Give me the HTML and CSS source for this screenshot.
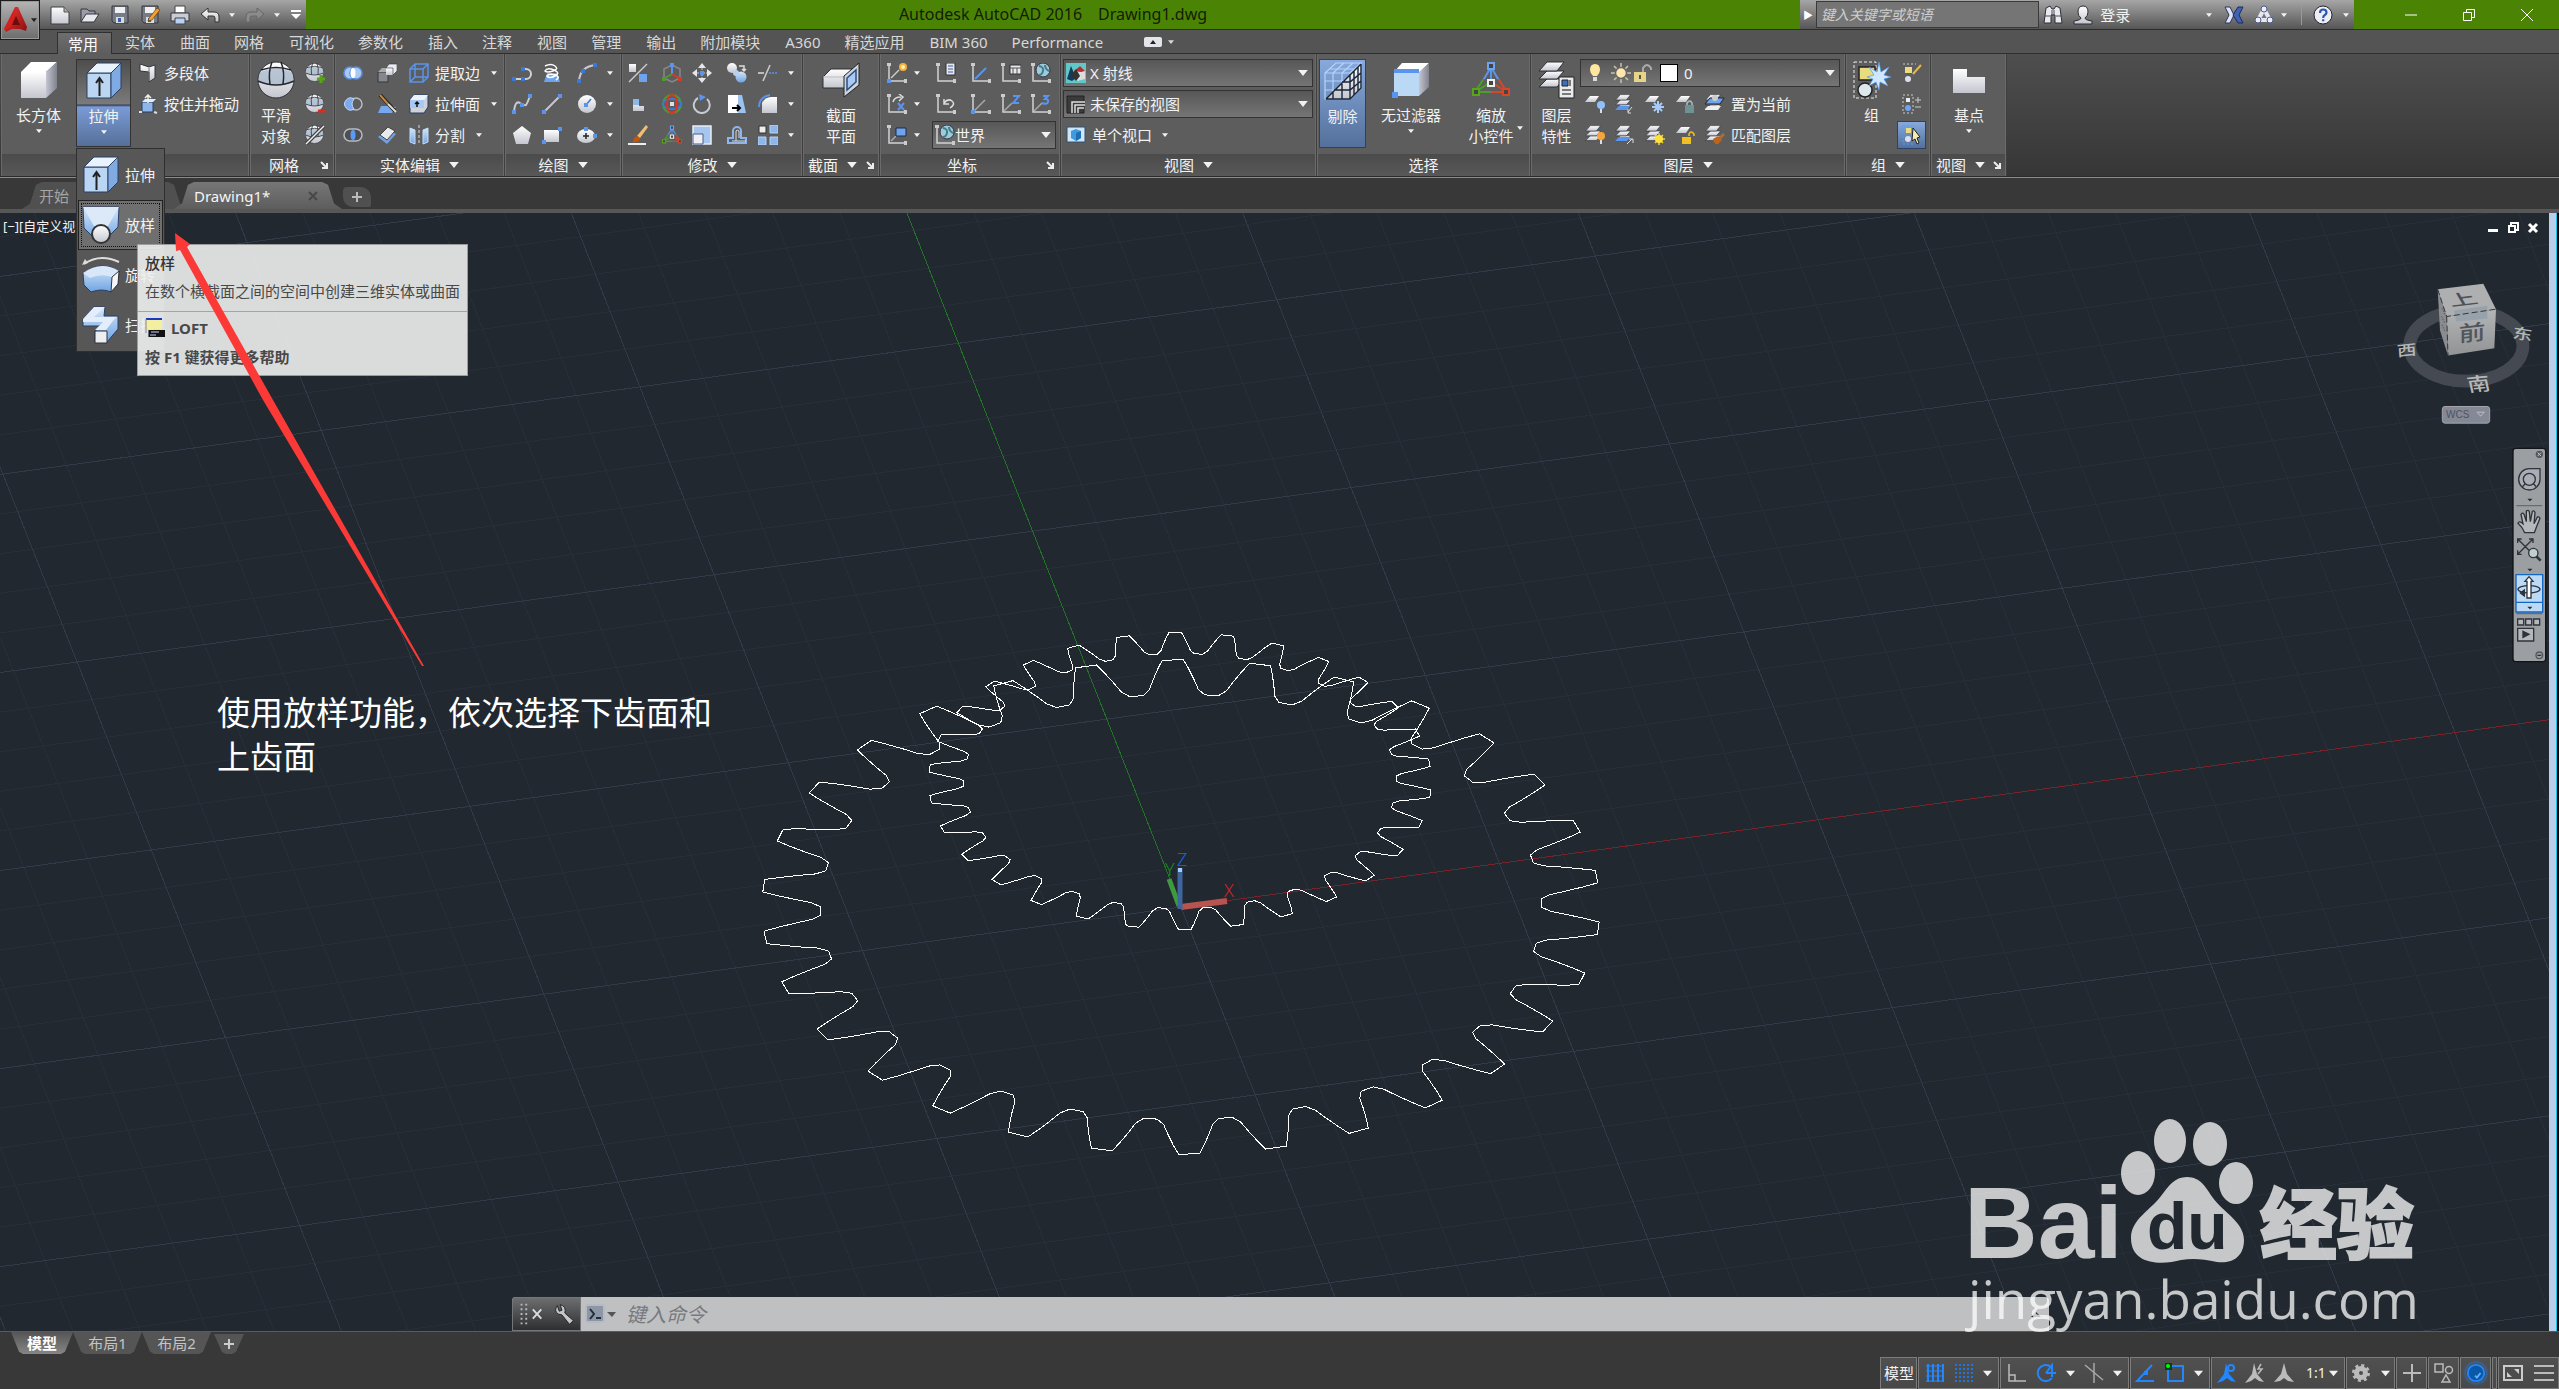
FILE: index.html
```html
<!DOCTYPE html>
<html lang="zh-CN">
<head>
<meta charset="utf-8">
<title>Autodesk AutoCAD 2016 Drawing1.dwg</title>
<link rel="stylesheet" href="styles.css">
</head>
<body>
<svg class="sprite" aria-hidden="true">
  <defs>
    <linearGradient id="gw" x1="0" y1="0" x2="0" y2="1"><stop offset="0" stop-color="#fff"/><stop offset="1" stop-color="#c4c6cf"/></linearGradient>
    <linearGradient id="gb" x1="0" y1="0" x2="0" y2="1"><stop offset="0" stop-color="#d5e6f8"/><stop offset="1" stop-color="#6ea4e4"/></linearGradient>
    <linearGradient id="gs" x1="0" y1="0" x2="1" y2="0"><stop offset="0" stop-color="#c3c6d2"/><stop offset="1" stop-color="#80828c"/></linearGradient>
    <linearGradient id="gc" x1="0" y1="0" x2="0" y2="1"><stop offset="0" stop-color="#b4b5b7"/><stop offset="1" stop-color="#929395"/></linearGradient>
    <linearGradient id="gr" x1="0" y1="0" x2="1" y2="1"><stop offset="0" stop-color="#f03a34"/><stop offset="1" stop-color="#8d0e10"/></linearGradient>
  </defs>
  <symbol id="dn" viewBox="0 0 8 5"><path d="M0 0h8L4 5z" fill="currentColor"/></symbol>
  <symbol id="dlg" viewBox="0 0 8 8"><path d="M1 1l5 5M7 2v5H2" fill="none" stroke="#eee" stroke-width="2"/></symbol>
  <symbol id="logo" viewBox="0 0 24 26"><path d="M11 0h3l9 20-1 4-6-2-3 0-5 0-6 3-2-3z" fill="url(#gr)"/><path d="M12 9l4 9H8z" fill="#6d0b0d"/><path d="M12 0L8 18l-6 5L0 22z" fill="#d5201f"/></symbol>
  <symbol id="new" viewBox="0 0 20 20"><path d="M1 2h13l5 5v12H1z" fill="url(#gw)" stroke="#3b3e46"/><path d="M14 2v5h5" fill="#aaa" stroke="#555"/></symbol>
  <symbol id="open" viewBox="0 0 20 20"><path d="M1 17V4h6l2 2h6v3" fill="#9a9da5" stroke="#33363d"/><path d="M1 17l5-8h13l-5 8z" fill="#e6e8ee" stroke="#33363d"/></symbol>
  <symbol id="save" viewBox="0 0 20 20"><path d="M2 1h16v17H4l-2-2z" fill="#767b86" stroke="#33363d"/><path d="M5 2h10v6H5z" fill="#eef0f4"/><path d="M6 12h8v6H6z" fill="#d8dae0"/><path d="M8 13h3v4H8z" fill="#3c5fa5"/></symbol>
  <symbol id="saveas" viewBox="0 0 20 20"><use href="#save"/><path d="M9 13l8-10 3 2-8 10-4 1z" fill="#f0a12e" stroke="#5c3b0c" stroke-width=".7"/></symbol>
  <symbol id="print" viewBox="0 0 20 20"><path d="M5 1h10v7H5z" fill="#fff" stroke="#444"/><path d="M1 8h18v8H1z" fill="#c9ccd4" stroke="#33363d"/><path d="M5 13h10v6H5z" fill="#b6d1f4" stroke="#444"/></symbol>
  <symbol id="undo" viewBox="0 0 20 20"><path d="M1 9l7-6v4h6q5 0 5 5v5h-4v-4q0-2-2-2H8v4z" fill="url(#gw)" stroke="#333"/></symbol>
  <symbol id="redo" viewBox="0 0 20 20"><path d="M19 9l-7-6v4H6q-5 0-5 5v5h4v-4q0-2 2-2h5v4z" fill="#8a8b8e" stroke="#666"/></symbol>
  <symbol id="more" viewBox="0 0 12 10"><path d="M1 1h10" stroke="#fff" stroke-width="2"/><path d="M1 4h10L6 9z" fill="#fff"/></symbol>
  <symbol id="bino" viewBox="0 0 20 20"><path d="M3 3l4-2 2 3h2l2-3 4 2 2 15h-7v-8H8v8H1z" fill="#e8eaf0" stroke="#2c2f36"/><path d="M2 11h5M13 11h5M9 5v5h2V5" stroke="#4a4d55" fill="none"/></symbol>
  <symbol id="user" viewBox="0 0 20 20"><path d="M10 1q5 0 5 6 0 4-3 6 0 2 7 3v3H1v-3q7-1 7-3-3-2-3-6 0-6 5-6z" fill="url(#gw)" stroke="#2c2f36"/></symbol>
  <symbol id="exch" viewBox="0 0 20 20"><path d="M1 2h5l4 8-4 8H1l4-8z" fill="#dfe5f2" stroke="#27375f"/><path d="M19 2h-5l-5 8 5 8h5l-4-8z" fill="#3f62b3" stroke="#1c2d5b"/></symbol>
  <symbol id="a360" viewBox="0 0 20 20"><path d="M10 4L4 15h12z" fill="none" stroke="#e4e8f2" stroke-width="4" stroke-linejoin="round"/><circle cx="10" cy="4" r="3" fill="#eef" stroke="#4a5c8c"/><circle cx="4" cy="15" r="3" fill="#eef" stroke="#4a5c8c"/><circle cx="16" cy="15" r="3" fill="#eef" stroke="#4a5c8c"/></symbol>
  <symbol id="help" viewBox="0 0 20 20"><circle cx="10" cy="10" r="9" fill="#eceef4" stroke="#23262c"/><path d="M7 8q0-3.500 3.200-3.500T13.500 7.500q0 1.500-1.700 2.500T10.200 13M10.200 14.200v2" fill="none" stroke="#2d55b0" stroke-width="2.200"/></symbol>

  <symbol id="box" viewBox="0 0 38 38"><path d="M1 11h25v26H1z" fill="url(#gw)"/><path d="M1 11L11 1h26L26 11z" fill="#fff"/><path d="M26 11L37 1v26L26 37z" fill="url(#gs)"/></symbol>
  <symbol id="extr" viewBox="0 0 38 38"><path d="M2 11h24v25H2z" fill="#bad6f2" stroke="#2a3f66"/><path d="M2 11L12 1h24L26 11z" fill="#e9f3fd" stroke="#2a3f66"/><path d="M26 11L36 1v25L26 36z" fill="#7fabe2" stroke="#2a3f66"/><path d="M14.500 34V17M11 21l3.500-5 3.500 5" fill="none" stroke="#222" stroke-width="2"/></symbol>
  <symbol id="loft" viewBox="0 0 38 38"><path d="M1 1h36l-1 20-13 13q-5 2-9 0L2 22z" fill="url(#gb)" stroke="#2a3f66"/><path d="M1 1h36L26 20H12z" fill="#dbe9f8"/><circle cx="19" cy="28" r="9" fill="url(#gw)" stroke="#333" stroke-width="2"/></symbol>
  <symbol id="revo" viewBox="0 0 38 38"><path d="M2 8Q18-3 37 6" fill="none" stroke="#ddd" stroke-width="2"/><path d="M0 9l3-6 3 4z" fill="#ddd"/><path d="M1 17q18-13 36-2l-1 13-7 8q-9-4-20 0l-7-7z" fill="url(#gb)" stroke="#2a3f66"/><path d="M1 17q18-13 36-2l-7 6q-11-4-22 1z" fill="#d9e8f8"/><path d="M30 21l7-6-1 13-7 8z" fill="#f4f6fa" stroke="#333"/></symbol>
  <symbol id="swp" viewBox="0 0 38 38"><path d="M1 13L12 1h11l-1 9h14v13L25 36H13V25l7-5H1z" fill="url(#gb)" stroke="#2a3f66"/><path d="M1 13L12 1h11L12 11h22L24 24H13l8-8H1z" fill="#e3eefa"/><path d="M13 25h12v12H13z" fill="#eceef2" stroke="#333"/></symbol>
  <symbol id="poly" viewBox="0 0 20 20"><path d="M2 1l9 3 6-2v13l-6 4V9L2 8z" fill="url(#gw)" stroke="#33363d"/><path d="M11 5v13" stroke="#777"/></symbol>
  <symbol id="press" viewBox="0 0 20 20"><path d="M4 8h11v10H4z" fill="#8db6ea" stroke="#2a3f66"/><path d="M4 8l3-3h11l-3 3z" fill="#dfeefd"/><path d="M1 18h3M16 18l3 1" stroke="#ddd" stroke-width="2"/><path d="M10 9V2M7 4l3-3 3 3" stroke="#eee" stroke-width="1.500" fill="none"/></symbol>
  <symbol id="ball" viewBox="0 0 38 38"><circle cx="19" cy="19" r="18" fill="url(#gw)" stroke="#2d3036"/><path d="M3 11q16-7 32 0l2 10q-18 6-36 0z" fill="#9fb3c7" opacity=".7"/><path d="M1 20q18 8 36 0M4 9q15-5 30 0M15 1q-4 10-2 22M24 1q4 10 2 22" fill="none" stroke="#23262c" stroke-width="1.500"/></symbol>
  <symbol id="ballp" viewBox="0 0 20 20"><g transform="scale(.5)"><use href="#ball" width="38" height="38"/></g><path d="M12 16h8M16 12v8" stroke="#58a618" stroke-width="3"/></symbol>
  <symbol id="ballm" viewBox="0 0 20 20"><g transform="scale(.5)"><use href="#ball" width="38" height="38"/></g><path d="M13 17h7" stroke="#e02b18" stroke-width="3"/></symbol>
  <symbol id="balls" viewBox="0 0 20 20"><g transform="scale(.5)"><use href="#ball" width="38" height="38"/></g><path d="M1 19L19 1" stroke="#444" stroke-width="4"/><path d="M1 19L19 1" stroke="#eee" stroke-width="1.500"/></symbol>
  <symbol id="uni" viewBox="0 0 20 20"><g fill="#a9c8f2" stroke="#5a90dd" stroke-width="1.500"><circle cx="7" cy="10" r="6"/><circle cx="13" cy="10" r="6"/></g><ellipse cx="10" cy="10" rx="2.500" ry="5" fill="#fff"/></symbol>
  <symbol id="sub" viewBox="0 0 20 20"><circle cx="13" cy="10" r="6" fill="none" stroke="#b9bbc2" stroke-width="1.500"/><path d="M11 5a6 6 0 1 0 0 10q-4-5 0-10z" fill="#7baaf0" stroke="#c3dafa"/></symbol>
  <symbol id="int" viewBox="0 0 20 20"><rect x="1" y="4" width="18" height="12" rx="6" fill="#4d4e52" stroke="#b9bbc2" stroke-width="1.500"/><ellipse cx="10" cy="10" rx="2.500" ry="5" fill="#5b9bf3"/></symbol>
  <symbol id="intf" viewBox="0 0 20 20"><path d="M1 9h10v10H1z" fill="#85878c" stroke="#33363d"/><path d="M1 9l4-4h10l-4 4z" fill="#aaa"/><path d="M9 5h7v7H9z" fill="url(#gw)"/><path d="M9 5l3-4h8v7l-4 4V5z" fill="#e8ecf4" stroke="#333" stroke-width=".6"/></symbol>
  <symbol id="slice" viewBox="0 0 20 20"><path d="M1 19l3-7h9l6 1-4 6z" fill="#76a8ef"/><path d="M3 1l15 16" stroke="#2c2015" stroke-width="4"/><path d="M3 1l8 9" stroke="#c08a4a" stroke-width="2"/><path d="M11 10l8 8" stroke="#ddd" stroke-width="2"/></symbol>
  <symbol id="thick" viewBox="0 0 20 20"><path d="M1 12L10 4l9 5-9 10z" fill="#6fa2e4"/><path d="M3 10l8-8 7 4-8 9z" fill="#e8eaee" stroke="#444"/></symbol>
  <symbol id="edges" viewBox="0 0 20 20"><path d="M1 6h13v13H1zM1 6l5-5h13v13l-5 5M14 6l5-5M6 1v13h13M6 14l-5 5" fill="none" stroke="#5a94ec" stroke-width="1.500"/></symbol>
  <symbol id="exf" viewBox="0 0 20 20"><path d="M1 6l4-5h14v12l-4 6H1z" fill="#cfd2da" stroke="#2a3f66"/><path d="M1 6h14v8H1z" fill="#a9c9f3"/><path d="M1 6l4-5h14l-4 5z" fill="#eaf3fd"/><path d="M8 13V8M6 10l2-2 2 2" stroke="#111" fill="none" stroke-width="1.500"/></symbol>
  <symbol id="sep" viewBox="0 0 20 20"><path d="M1 3l5 2v14l-5-2zM19 3l-5 2v14l5-2z" fill="url(#gb)" stroke="#c6dcf8"/><path d="M10 0v20" stroke="#ddd" stroke-dasharray="3 2"/></symbol>

  <symbol id="pl" viewBox="0 0 20 20"><path d="M2 16h12a5 5 0 0 0 0-10h-4" fill="none" stroke="#d0d2d8" stroke-width="2"/><g fill="#3c78d8"><path d="M0 14h4v4H0zM9 4h4v4H9zM9 14h4v4H9z"/></g></symbol>
  <symbol id="helix" viewBox="0 0 20 20"><path d="M5 10h10l3 9H2z" fill="#6ea4ee"/><path d="M3 3q6-3 10 0t-2 5-8 0q2-4 9-1t1 6-8 0q2-3 8-1t1 5" fill="none" stroke="#fff" stroke-width="1.500"/></symbol>
  <symbol id="arc" viewBox="0 0 20 20"><path d="M2 18Q3 4 18 2" fill="none" stroke="#c8cad2" stroke-width="2"/><g fill="#3c78d8"><path d="M0 16h4v4H0zM4 6h4v4H4zM16 0h4v4h-4z"/></g></symbol>
  <symbol id="spl" viewBox="0 0 20 20"><path d="M2 18Q3 6 8 9t6 2 4-9" fill="none" stroke="#c8cad2" stroke-width="2"/><g fill="#5a94ec"><path d="M0 16h4v4H0zM8 9h4v4H8zM16 0h4v4h-4z"/></g></symbol>
  <symbol id="line" viewBox="0 0 20 20"><path d="M2 18L18 2" stroke="#c8cad2" stroke-width="2"/><path d="M0 16h4v4H0zM16 0h4v4h-4z" fill="#5a94ec"/></symbol>
  <symbol id="circ" viewBox="0 0 20 20"><circle cx="10" cy="10" r="9" fill="url(#gw)"/><path d="M9 11l5-6" stroke="#3c78d8" stroke-width="1.500"/><path d="M7 9h4v4H7z" fill="#5a94ec"/></symbol>
  <symbol id="pent" viewBox="0 0 20 20"><path d="M10 1l9 7-3 11H4L1 8z" fill="url(#gw)"/></symbol>
  <symbol id="rect" viewBox="0 0 20 20"><path d="M2 5h15v12H2z" fill="url(#gw)"/><path d="M0 15h4v4H0zM16 2h4v4h-4z" fill="#5a94ec"/></symbol>
  <symbol id="ell" viewBox="0 0 20 20"><ellipse cx="9" cy="11" rx="9" ry="7" fill="url(#gw)"/><path d="M6 11h6M9 8v6" stroke="#222" stroke-width="1.500"/><path d="M7 2h4v4H7zM16 9h4v4h-4z" fill="#5a94ec"/></symbol>

  <symbol id="m1" viewBox="0 0 20 20"><path d="M1 1h7v8H1z" fill="url(#gw)"/><path d="M11 11h8v8h-8z" fill="#6ea4ee"/><path d="M1 19L19 1" stroke="#ccc" stroke-width="1.500"/></symbol>
  <symbol id="m2" viewBox="0 0 20 20"><path d="M10 2l8 4v9l-8 4-8-4V6z" fill="none" stroke="#888" stroke-width="1.500"/><path d="M10 11V4" stroke="#5a94ec" stroke-width="2"/><path d="M10 11l-7 4" stroke="#4ba02a" stroke-width="2"/><path d="M10 11l7 4" stroke="#d83a22" stroke-width="2"/><path d="M0 14h4v4H0z" fill="#4ba02a"/><path d="M16 14h4v4h-4z" fill="#d83a22"/><path d="M8 0h4v4H8z" fill="#5a94ec"/></symbol>
  <symbol id="move" viewBox="0 0 20 20"><path d="M10 0l4 5h-8zM10 20l4-5h-8zM0 10l5-4v8zM20 10l-5-4v8z" fill="#e4e6ec"/><path d="M10 5v10M5 10h10" stroke="#ccc" stroke-dasharray="2 1"/><path d="M8 8h4v4H8z" fill="#5a94ec"/></symbol>
  <symbol id="copy" viewBox="0 0 20 20"><circle cx="5" cy="5" r="5" fill="url(#gw)"/><circle cx="14" cy="14" r="5.500" fill="url(#gb)"/><path d="M12 3h5v4M15 6l2 2 2-2" fill="none" stroke="#ddd" stroke-width="1.500"/><circle cx="9" cy="10" r="3" fill="#b8cff0"/></symbol>
  <symbol id="trim" viewBox="0 0 20 20"><path d="M0 10h6" stroke="#ddd" stroke-width="1.500"/><path d="M11 10h9" stroke="#5a94ec" stroke-width="1.500" stroke-dasharray="2 1"/><path d="M5 18L12 2" stroke="#ccc" stroke-width="1.500"/></symbol>
  <symbol id="m3" viewBox="0 0 20 20"><path d="M5 5h6v7h5v5H5z" fill="url(#gw)"/><path d="M5 5h6v6H5z" fill="#8db6ea"/></symbol>
  <symbol id="orb" viewBox="0 0 20 20"><circle cx="10" cy="10" r="9" fill="none" stroke="#4ba02a" stroke-width="2"/><ellipse cx="10" cy="10" rx="9" ry="5" fill="none" stroke="#3c78d8" stroke-width="2"/><ellipse cx="10" cy="10" rx="5" ry="9" fill="none" stroke="#e0321e" stroke-width="2"/><path d="M8 8h4v4H8z" fill="#ddd"/></symbol>
  <symbol id="rot" viewBox="0 0 20 20"><path d="M6 4a8 8 0 1 0 9 1" fill="none" stroke="#c8cad2" stroke-width="2"/><path d="M7 0l7 3-6 4z" fill="#5a94ec"/></symbol>
  <symbol id="tap" viewBox="0 0 20 20"><path d="M1 1h10v18H1z" fill="#fff"/><path d="M11 1l4 0 4 18h-8z" fill="#9cc3f0"/><path d="M5 14h7M10 11l3 3-3 3" stroke="#000" stroke-width="2" fill="none"/></symbol>
  <symbol id="fil" viewBox="0 0 20 20"><path d="M4 19V9q3-6 9-6h6v16z" fill="url(#gw)"/><path d="M1 13Q1 3 12 1" stroke="#5a94ec" stroke-width="2" fill="none"/></symbol>
  <symbol id="brush" viewBox="0 0 20 20"><path d="M9 11l9-11 2 2-8 11z" fill="#eec070"/><path d="M5 17q0-5 5-6l2 3q-2 4-7 3z" fill="#c0560f"/><path d="M0 19h18" stroke="#eee" stroke-width="2"/></symbol>
  <symbol id="giz" viewBox="0 0 38 38"><path d="M19 6L3 31h32z" fill="none" stroke="#888" stroke-width="1"/><path d="M19 6v15M19 6l-7 12M19 6l7 12" stroke="#5a94ec" stroke-width="2" fill="none"/><path d="M3 31l16-10M3 31h15M3 31l8-12" stroke="#4ba02a" stroke-width="2" fill="none"/><path d="M35 31L19 21M35 31H20M35 31l-8-12" stroke="#d8462a" stroke-width="2" fill="none"/><g fill="#444" stroke-width="2"><path d="M16 2h6v6h-6z" stroke="#6ea4ee"/><path d="M1 28h6v6H1z" stroke="#58a618"/><path d="M31 28h6v6h-6z" stroke="#d8462a"/><path d="M16 19h6v6h-6z" stroke="#eee"/></g></symbol>
  <symbol id="scale" viewBox="0 0 20 20"><path d="M1 1h18v18H1z" fill="#a6c6f0" stroke="#e8eef8" stroke-width="1.500"/><path d="M1 9h10v10H1z" fill="#eef0f4" stroke="#4a5c8c"/></symbol>
  <symbol id="off" viewBox="0 0 20 20"><path d="M1 18h18v-5h-5V6a4 4 0 0 0-8 0v7H1z" fill="none" stroke="#8db6ea" stroke-width="2"/><path d="M5 16h14M9 16V6a2 2 0 0 1 3 0v7" fill="none" stroke="#ddd" stroke-width="1"/></symbol>
  <symbol id="arr" viewBox="0 0 20 20"><path d="M1 1h7v7H1z" fill="#eee" stroke="#333"/><path d="M12 0h8v8h-8zM0 12h8v8H0zM12 12h8v8h-8z" fill="#8db6ea" stroke="#b9d3f6"/></symbol>
  <symbol id="sect" viewBox="0 0 38 38"><path d="M1 16l8-8h22v12l-8 7H1z" fill="url(#gw)" stroke="#2d3036"/><path d="M1 16h22v11" fill="none" stroke="#bbb"/><path d="M22 15L37 2v22L22 36z" fill="#d0d4da" stroke="#222"/><path d="M25 17l9-8v12l-9 8z" fill="#a9c9f3" stroke="#2a4f86" stroke-width="1.500"/></symbol>

  <symbol id="ax" viewBox="0 0 20 20"><path d="M2 1v17h17" fill="none" stroke="#d0d2d8" stroke-width="1.500"/><path d="M0 0h4v3H0zM17 16h3v4h-3z" fill="#ccc"/></symbol>
  <symbol id="c1" viewBox="0 0 20 20"><use href="#ax"/><path d="M4 15l8-8" stroke="#ccc" stroke-width="1.500"/><circle cx="16" cy="4" r="4" fill="#f7b03a"/><circle cx="16" cy="4" r="2" fill="#fff2b0"/><path d="M0 16h4v4H0z" fill="#5a94ec"/></symbol>
  <symbol id="c2" viewBox="0 0 20 20"><use href="#ax"/><path d="M10 0h9v12h-9z" fill="#e8e8ec" stroke="#333"/><path d="M12 3h5M12 6h5M12 9h5" stroke="#3c5fa5"/></symbol>
  <symbol id="c3" viewBox="0 0 20 20"><use href="#ax"/><path d="M4 16L15 5" stroke="#5a94ec" stroke-width="2"/></symbol>
  <symbol id="c4" viewBox="0 0 20 20"><use href="#ax"/><path d="M9 2h11v9H9z" fill="#e8e8ec" stroke="#333"/><path d="M9 5h11M12 5v6M16 5v6" stroke="#555"/></symbol>
  <symbol id="c5" viewBox="0 0 20 20"><use href="#ax"/><circle cx="12" cy="7" r="7" fill="#9fc9dc" stroke="#334"/><path d="M8 3q5 1 4 5t-4 4M14 2q0 4 4 6" fill="none" stroke="#3f7f86" stroke-width="2"/></symbol>
  <symbol id="c6" viewBox="0 0 20 20"><use href="#ax"/><path d="M6 8q1-5 8-5M12 0l4 3-4 4" fill="none" stroke="#ddd" stroke-width="1.500"/><path d="M11 9l6 7M17 9l-6 7" stroke="#5a94ec" stroke-width="2"/></symbol>
  <symbol id="c7" viewBox="0 0 20 20"><use href="#ax"/><path d="M8 9q4-5 8-2t-2 7M8 5v5h5" fill="none" stroke="#ddd" stroke-width="1.500"/></symbol>
  <symbol id="c8" viewBox="0 0 20 20"><use href="#ax"/><path d="M3 17L14 6" stroke="#aaa" stroke-width="1.500"/><path d="M0 16h4v4H0z" fill="#5a94ec"/></symbol>
  <symbol id="c9" viewBox="0 0 20 20"><use href="#ax"/><path d="M3 17l8-8" stroke="#aaa" stroke-width="1.500"/><path d="M12 2h6l-6 7h6" fill="none" stroke="#5a94ec" stroke-width="2"/></symbol>
  <symbol id="c10" viewBox="0 0 20 20"><use href="#ax"/><path d="M3 17l8-8" stroke="#aaa" stroke-width="1.500"/><path d="M12 2h5l-3 3q4 0 3 3t-6 1" fill="none" stroke="#5a94ec" stroke-width="2"/></symbol>
  <symbol id="c11" viewBox="0 0 20 20"><use href="#ax"/><path d="M4 16l5-5" stroke="#aaa" stroke-width="1.500"/><path d="M9 3h10v8H9z" fill="#6ea4ee" stroke="#1d2d4d"/></symbol>

  <symbol id="xray" viewBox="0 0 20 20"><path d="M0 0h20v20H0z" fill="#5fc9c9"/><path d="M1 16L5 3l5 12-4 3z" fill="#153a5c"/><path d="M8 8l6-5 5 5v8l-8 2z" fill="#ddd"/><path d="M8 8l6-5 5 5-4 1z" fill="#b03030"/><path d="M5 12l5-6 4 7-4 5z" fill="#333"/></symbol>
  <symbol id="view" viewBox="0 0 20 20"><path d="M1 2h17v17H1z" fill="#3a3a3a" stroke="#222"/><path d="M6 19V8h13M9 19v-8h10M12 19v-5h6" stroke="#ddd" fill="none" stroke-width="1.500"/></symbol>
  <symbol id="vp" viewBox="0 0 20 20"><path d="M1 2h18v15H1z" fill="#cfe6fa" stroke="#33506f"/><path d="M5 6l5-2 5 2v7l-5 3-5-3z" fill="#3f9be0"/><path d="M10 8v8l5-3V6z" fill="#1f6fb4"/></symbol>
  <symbol id="cull" viewBox="0 0 38 38"><path d="M2 37L37 2v24L27 37z" fill="url(#gw)"/><path d="M1 11h25v26H1zM1 11L12 1h25L26 11M37 1v25L26 37M9 11v26M18 11v26M1 19h25M1 28h25M26 19l11-9M26 28l11-9M30 8v25M34 4v25M6 7h25M20 1L9 11M29 1L18 11" fill="none" stroke="#b4d4ff" stroke-width="1.200"/><path d="M2 37h24L37 26V2M18 22v15M26 12v25M9 30v7M10 28h16l11-9M18 20h8l11-9M30 9v24M34 5v24M2 37L37 2" fill="none" stroke="#1d2430" stroke-width="1.400"/></symbol>
  <symbol id="nofil" viewBox="0 0 38 38"><path d="M2 11h25v24H2z" fill="#bbd8f4"/><path d="M2 11l8-9h27l-9 9z" fill="#fff"/><path d="M27 11L37 2v24l-10 9z" fill="url(#gs)"/><path d="M2 8h25v4H2zM0 31h6v6H0z" fill="#5a94ec"/></symbol>

  <symbol id="sheets" viewBox="0 0 38 38"><g fill="url(#gw)" stroke="#2d3036"><path d="M1 26l8-8h17l-7 8z"/><path d="M1 18l8-8h17l-7 8z"/><path d="M1 10l8-9h17l-7 9z"/></g></symbol>
  <symbol id="lprop" viewBox="0 0 38 38"><use href="#sheets"/><path d="M21 16h15v21H21z" fill="#e8eaee" stroke="#222"/><path d="M24 19h6v6h-6z" fill="#3f6fc0" stroke="#222"/><path d="M32 19v6M24 29h9M24 33h9" stroke="#555" stroke-width="1.500"/></symbol>
  <symbol id="s1" viewBox="0 0 20 20"><path d="M0 8l5-6h9l-4 6z" fill="url(#gw)"/></symbol>
  <symbol id="s3" viewBox="0 0 20 20"><g transform="scale(.6)"><use href="#sheets" width="38" height="38"/></g></symbol>
  <symbol id="l1" viewBox="0 0 20 20"><use href="#s1"/><circle cx="16" cy="11" r="4" fill="#8fc0fa"/><path d="M15 15h2v4h-2z" fill="#ddd"/></symbol>
  <symbol id="l2" viewBox="0 0 20 20"><use href="#s3"/><path d="M0 16l4-4h11l-3 4z" fill="#5a94ec"/><path d="M17 13l-4 5M13 15v4h3" stroke="#ddd" fill="none"/></symbol>
  <symbol id="l3" viewBox="0 0 20 20"><use href="#s1"/><path d="M13 7v12M7 13h12M9 9l8 8M17 9l-8 8" stroke="#a8ccfa" stroke-width="2"/></symbol>
  <symbol id="l4" viewBox="0 0 20 20"><use href="#s1"/><path d="M11 11V9q3-4 5 0v2" stroke="#aebfc0" fill="none" stroke-width="1.500"/><path d="M9 11h9v8H9z" fill="#6f9296"/></symbol>
  <symbol id="l5" viewBox="0 0 20 20"><use href="#s3"/><path d="M0 10l5-6h14l-4 6z" fill="#6ea4ee" stroke="#223"/><circle cx="10" cy="4" r="3" fill="#ccc"/><path d="M0 15l3-3h13l-3 4H0z" fill="#eee"/></symbol>
  <symbol id="l6" viewBox="0 0 20 20"><use href="#s3"/><circle cx="16" cy="11" r="4" fill="#f7a53a"/><path d="M15 15h2v4h-2z" fill="#ddd"/></symbol>
  <symbol id="l7" viewBox="0 0 20 20"><use href="#s3"/><path d="M0 16l4-4h11l-3 4z" fill="#5a94ec"/><path d="M12 19l5-5M14 14h4v4" stroke="#ddd" fill="none"/></symbol>
  <symbol id="l8" viewBox="0 0 20 20"><use href="#s3"/><path d="M14 8v12M8 14h12M10 10l8 8M18 10l-8 8" stroke="#f2d040" stroke-width="1.500"/><circle cx="14" cy="14" r="4" fill="#ffe23c"/></symbol>
  <symbol id="l9" viewBox="0 0 20 20"><use href="#s1"/><path d="M13 11V9q2-4 5 0v2" stroke="#f0c020" fill="none" stroke-width="1.500"/><path d="M6 12h9v7H6z" fill="#f0c020"/></symbol>
  <symbol id="l10" viewBox="0 0 20 20"><use href="#s3"/><path d="M8 14l5-3 4 4-4 4q-4 1-5-5z" fill="#c0641c"/><path d="M14 12l4-4 2 2-4 4z" fill="#a5703c"/></symbol>
  <symbol id="bulb" viewBox="0 0 12 20"><path d="M6 1q5 0 5 6 0 3-3 6H4Q1 10 1 7q0-6 5-6z" fill="#ffe7a0"/><path d="M4 14h4v4H4z" fill="#ddd"/></symbol>
  <symbol id="sun" viewBox="0 0 20 20"><path d="M10 0v20M0 10h20M3 3l14 14M17 3L3 17" stroke="#c8c2b0" stroke-width="1.500"/><circle cx="10" cy="10" r="5.500" fill="#ffe7b0" stroke="#666" stroke-width="1.500"/></symbol>
  <symbol id="unlock" viewBox="0 0 20 20"><path d="M10 9V5q4-6 8 0v2" stroke="#aaa" stroke-width="2" fill="none"/><path d="M1 9h12v10H1z" fill="#e8d488"/><path d="M6 12h2v4H6z" fill="#554"/></symbol>
  <symbol id="grp" viewBox="0 0 38 38"><path d="M1 1h22v36H1z" fill="none" stroke="#eee" stroke-dasharray="3 2"/><path d="M6 6h16v13H6z" fill="#e8dc82" stroke="#222" stroke-width="1.500"/><circle cx="12" cy="29" r="7" fill="#dce8ec" stroke="#222" stroke-width="1.500"/><path d="M26 1l2 10 8-5-5 8 7 2-7 2 4 7-8-4-1 8-3-8-7 4 4-7-6-2 7-2-5-8 8 5z" fill="#cfe8ff" stroke="#4a9af0" stroke-width=".7"/></symbol>
  <symbol id="g2" viewBox="0 0 20 20"><path d="M1 1h13" stroke="#ccc" stroke-dasharray="2 2"/><path d="M3 4h7v6H3z" fill="#e8dc82"/><circle cx="6" cy="16" r="3" fill="#dde"/><path d="M11 11l8-9" stroke="#e8b84a" stroke-width="2"/></symbol>
  <symbol id="g3" viewBox="0 0 20 20"><path d="M1 1h10v18H1z" fill="none" stroke="#ccc" stroke-dasharray="2 2"/><path d="M4 4h4v4H4z" fill="#eee"/><circle cx="6" cy="14" r="3" fill="#6ea4ee"/><path d="M13 6h6M16 3v6M13 13h6" stroke="#ccc"/></symbol>
  <symbol id="g4" viewBox="0 0 20 20"><path d="M1 1h10v18H1z" fill="none" stroke="#4ba0ff" stroke-dasharray="2 2"/><path d="M4 3h5v5H4z" fill="#e8dc82"/><circle cx="6" cy="14" r="3" fill="#dde"/><path d="M11 3l7 9-3 1 2 5-2 1-2-5-3 2z" fill="#f3eeb0" stroke="#222"/></symbol>
  <symbol id="base" viewBox="0 0 38 38"><path d="M3 8h14v8h18v16H3z" fill="url(#gw)"/></symbol>
  <symbol id="cmdi" viewBox="0 0 20 20"><path d="M1 1h16v10H1z" fill="#f3eea0"/><path d="M1 1h16" stroke="#1b36c0" stroke-width="2"/><path d="M1 1v14" stroke="#888"/><path d="M3 12h17v7H3z" fill="#111"/><path d="M3 11v8M6 14h8M5 17h6" stroke="#cdd6ff"/></symbol>

  <symbol id="b1" viewBox="0 0 20 20"><path d="M3 1v18M8 1v18M13 1v18M18 1v18" stroke="#2287ff" stroke-width="2"/><path d="M1 3h18M1 8h18M1 13h18M1 18h18" stroke="#2287ff"/></symbol>
  <symbol id="b2" viewBox="0 0 20 20"><path d="M1 2h18M1 6h18M1 10h18M1 14h18M1 18h18" stroke="#1f76dc" stroke-width="2" stroke-dasharray="2 2"/></symbol>
  <symbol id="b3" viewBox="0 0 20 20"><path d="M2 1v17h17M2 12h6v6" fill="none" stroke="#bbb" stroke-width="1.500"/></symbol>
  <symbol id="b4" viewBox="0 0 20 20"><path d="M15 4a8 8 0 1 0 1 11M10 10h10M10 10l6-8v12" fill="none" stroke="#2287ff" stroke-width="2"/></symbol>
  <symbol id="b5" viewBox="0 0 20 20"><path d="M1 2l18 15M10 0v20" fill="none" stroke="#a8a8a8" stroke-width="1.500"/></symbol>
  <symbol id="b6" viewBox="0 0 20 20"><path d="M17 2L2 18h17" fill="none" stroke="#2287ff" stroke-width="2"/><path d="M9 8h4v4H9z" fill="#2287ff"/></symbol>
  <symbol id="b7" viewBox="0 0 20 20"><path d="M3 3h15v15H3z" fill="none" stroke="#2287ff" stroke-width="2"/><path d="M0 0h7v7H0z" fill="#041"/><circle cx="3" cy="3" r="2" fill="#0f0"/></symbol>
  <symbol id="b8" viewBox="0 0 20 20"><path d="M9 0l3 11 7 8-5-1-4-3-4 3-6 2 7-9z" fill="#2287ff"/><circle cx="14" cy="5" r="3" fill="none" stroke="#2287ff" stroke-width="2"/></symbol>
  <symbol id="b9" viewBox="0 0 20 20"><path d="M9 0l3 11 7 8-5-1-4-3-4 3-6 2 7-9z" fill="#bbb"/><path d="M16 1l-3 5h4l-4 5" stroke="#bbb" fill="none" stroke-width="1.500"/></symbol>
  <symbol id="b10" viewBox="0 0 20 20"><path d="M10 0l3 11 7 8-6-1-4-3-4 3-6 1 7-8z" fill="#bbb"/></symbol>
  <symbol id="b11" viewBox="0 0 20 20"><circle cx="10" cy="10" r="4.500" fill="none" stroke="#bbb" stroke-width="5"/><circle cx="10" cy="10" r="7.500" fill="none" stroke="#bbb" stroke-width="3" stroke-dasharray="3 2.890"/></symbol>
  <symbol id="b12" viewBox="0 0 20 20"><path d="M10 1v18M1 10h18" stroke="#bbb" stroke-width="2"/></symbol>
  <symbol id="b13" viewBox="0 0 20 20"><path d="M1 1h8v8H1zM9 19h-1l4-7 4 7z" fill="none" stroke="#bbb" stroke-width="1.500"/><circle cx="15" cy="7" r="3.500" fill="none" stroke="#bbb" stroke-width="1.500"/></symbol>
  <symbol id="b14" viewBox="0 0 22 22"><circle cx="11" cy="11" r="9" fill="#0a59a8" stroke="#2287ff" stroke-width="2"/><path d="M10 14l2 2 4-5" stroke="#62b0ff" fill="none" stroke-width="2"/></symbol>
  <symbol id="b15" viewBox="0 0 20 20"><path d="M1 3h18v14H1z" fill="none" stroke="#ccc" stroke-width="2"/><path d="M4 14v-5l5 5zM16 6v5l-5-5z" fill="#ccc"/></symbol>
  <symbol id="b16" viewBox="0 0 20 20"><path d="M0 3h20M0 10h20M0 17h20" stroke="#bbb" stroke-width="2"/></symbol>
</svg>

<header class="titlebar">
  <button class="app" aria-label="应用程序"><svg class="logo"><use href="#logo"/></svg><svg class="dn dark"><use href="#dn"/></svg></button>
  <div class="qat">
    <button aria-label="新建"><svg class="i"><use href="#new"/></svg></button>
    <button aria-label="打开"><svg class="i"><use href="#open"/></svg></button>
    <button aria-label="保存"><svg class="i"><use href="#save"/></svg></button>
    <button aria-label="另存为"><svg class="i"><use href="#saveas"/></svg></button>
    <button aria-label="打印"><svg class="i"><use href="#print"/></svg></button>
    <button aria-label="放弃" class="split"><svg class="i"><use href="#undo"/></svg><svg class="dn"><use href="#dn"/></svg></button>
    <button aria-label="重做" class="split"><svg class="i"><use href="#redo"/></svg><svg class="dn"><use href="#dn"/></svg></button>
    <button aria-label="自定义"><svg class="more"><use href="#more"/></svg></button>
  </div>
  <h1 class="caption"><span>Autodesk AutoCAD 2016</span><span>Drawing1.dwg</span></h1>
  <div class="info">
    <button class="fold" aria-label="折叠">▶</button>
    <input class="search" type="text" placeholder="键入关键字或短语" aria-label="搜索">
    <button aria-label="搜索"><svg class="i"><use href="#bino"/></svg></button>
    <button class="login"><svg class="i"><use href="#user"/></svg><span>登录</span><svg class="dn"><use href="#dn"/></svg></button>
    <button aria-label="Exchange"><svg class="i"><use href="#exch"/></svg></button>
    <button aria-label="A360" class="split"><svg class="i"><use href="#a360"/></svg><svg class="dn"><use href="#dn"/></svg></button>
    <button aria-label="帮助" class="split help"><svg class="i"><use href="#help"/></svg><svg class="dn"><use href="#dn"/></svg></button>
  </div>
  <div class="win">
    <button aria-label="最小化"><svg viewBox="0 0 12 12"><path d="M0 6h12" stroke="#fff"/></svg></button>
    <button aria-label="还原"><svg viewBox="0 0 12 12"><path d="M.5 3.500h8v8h-8zM3.500 3V.5h8v8H9" fill="none" stroke="#fff"/></svg></button>
    <button aria-label="关闭"><svg viewBox="0 0 12 12"><path d="M0 0l12 12M12 0L0 12" stroke="#fff"/></svg></button>
  </div>
</header>

<nav class="tabs">
  <button class="on">常用</button><button>实体</button><button>曲面</button><button>网格</button><button>可视化</button><button>参数化</button><button>插入</button><button>注释</button><button>视图</button><button>管理</button><button>输出</button><button>附加模块</button><button>A360</button><button>精选应用</button><button>BIM 360</button><button>Performance</button>
  <button class="toggle" aria-label="最小化功能区"><svg class="tog" viewBox="0 0 18 10"><rect width="18" height="10" rx="2" fill="#e4e5ea"/><path d="M6 7h6L9 3z" fill="#222"/></svg><svg class="dn"><use href="#dn"/></svg></button>
</nav>

<div class="ribbon">
  <section class="panel p1">
    <div class="body">
      <button class="big w75"><svg class="I"><use href="#box"/></svg><span>长方体</span><svg class="dn"><use href="#dn"/></svg></button>
      <button class="big w55 open"><svg class="I"><use href="#extr"/></svg><span>拉伸</span><svg class="dn"><use href="#dn"/></svg></button>
      <div class="grid g-m">
        <button><svg class="i"><use href="#poly"/></svg>多段体</button>
        <button><svg class="i"><use href="#press"/></svg>按住并拖动</button>
      </div>
    </div>
    <h2></h2>
  </section>
  <section class="panel p2">
    <div class="body">
      <button class="big w52"><svg class="I"><use href="#ball"/></svg><span>平滑<br>对象</span></button>
      <div class="grid g-1">
        <button aria-label="提高平滑度"><svg class="i"><use href="#ballp"/></svg></button>
        <button aria-label="降低平滑度"><svg class="i"><use href="#ballm"/></svg></button>
        <button aria-label="优化网格"><svg class="i"><use href="#balls"/></svg></button>
      </div>
    </div>
    <h2><span>网格</span><svg class="dlg"><use href="#dlg"/></svg></h2>
  </section>
  <section class="panel p3">
    <div class="body">
      <div class="grid g-3">
        <button aria-label="并集"><svg class="i"><use href="#uni"/></svg></button><button aria-label="干涉"><svg class="i"><use href="#intf"/></svg></button><button><svg class="i"><use href="#edges"/></svg>提取边<svg class="dn"><use href="#dn"/></svg></button>
        <button aria-label="差集"><svg class="i"><use href="#sub"/></svg></button><button aria-label="剖切"><svg class="i"><use href="#slice"/></svg></button><button><svg class="i"><use href="#exf"/></svg>拉伸面<svg class="dn"><use href="#dn"/></svg></button>
        <button aria-label="交集"><svg class="i"><use href="#int"/></svg></button><button aria-label="加厚"><svg class="i"><use href="#thick"/></svg></button><button><svg class="i"><use href="#sep"/></svg>分割<svg class="dn"><use href="#dn"/></svg></button>
      </div>
    </div>
    <h2><span>实体编辑</span><svg class="DN"><use href="#dn"/></svg></h2>
  </section>
  <section class="panel p4">
    <div class="body">
      <div class="grid g-4">
        <button aria-label="多段线"><svg class="i"><use href="#pl"/></svg></button><button aria-label="螺旋"><svg class="i"><use href="#helix"/></svg></button><button class="split" aria-label="圆弧"><svg class="i"><use href="#arc"/></svg><svg class="dn"><use href="#dn"/></svg></button>
        <button aria-label="样条曲线"><svg class="i"><use href="#spl"/></svg></button><button aria-label="直线"><svg class="i"><use href="#line"/></svg></button><button class="split" aria-label="圆"><svg class="i"><use href="#circ"/></svg><svg class="dn"><use href="#dn"/></svg></button>
        <button aria-label="多边形"><svg class="i"><use href="#pent"/></svg></button><button aria-label="矩形"><svg class="i"><use href="#rect"/></svg></button><button class="split" aria-label="椭圆"><svg class="i"><use href="#ell"/></svg><svg class="dn"><use href="#dn"/></svg></button>
      </div>
    </div>
    <h2><span>绘图</span><svg class="DN"><use href="#dn"/></svg></h2>
  </section>
  <section class="panel p5">
    <div class="body">
      <div class="grid g-5">
        <button aria-label="三维对齐"><svg class="i"><use href="#m1"/></svg></button><button aria-label="三维移动"><svg class="i"><use href="#m2"/></svg></button><button aria-label="移动"><svg class="i"><use href="#move"/></svg></button><button aria-label="复制"><svg class="i"><use href="#copy"/></svg></button><button class="split" aria-label="修剪"><svg class="i"><use href="#trim"/></svg><svg class="dn"><use href="#dn"/></svg></button>
        <button aria-label="对齐"><svg class="i"><use href="#m3"/></svg></button><button aria-label="三维旋转"><svg class="i"><use href="#orb"/></svg></button><button aria-label="旋转"><svg class="i"><use href="#rot"/></svg></button><button aria-label="拉伸"><svg class="i"><use href="#tap"/></svg></button><button class="split" aria-label="圆角"><svg class="i"><use href="#fil"/></svg><svg class="dn"><use href="#dn"/></svg></button>
        <button aria-label="特性匹配"><svg class="i"><use href="#brush"/></svg></button><button aria-label="三维缩放"><svg class="i"><use href="#giz"/></svg></button><button aria-label="缩放"><svg class="i"><use href="#scale"/></svg></button><button aria-label="偏移"><svg class="i"><use href="#off"/></svg></button><button class="split" aria-label="阵列"><svg class="i"><use href="#arr"/></svg><svg class="dn"><use href="#dn"/></svg></button>
      </div>
    </div>
    <h2><span>修改</span><svg class="DN"><use href="#dn"/></svg></h2>
  </section>
  <section class="panel p6">
    <div class="body">
      <button class="big fill"><svg class="I"><use href="#sect"/></svg><span>截面<br>平面</span></button>
    </div>
    <h2><span>截面</span><svg class="DN"><use href="#dn"/></svg><svg class="dlg"><use href="#dlg"/></svg></h2>
  </section>
  <section class="panel p7">
    <div class="body">
      <div class="grid g-7">
        <button class="split" aria-label="原点"><svg class="i"><use href="#c1"/></svg><svg class="dn"><use href="#dn"/></svg></button><button aria-label="命名 UCS"><svg class="i"><use href="#c2"/></svg></button><button aria-label="UCS"><svg class="i"><use href="#c3"/></svg></button><button aria-label="UCS 设置"><svg class="i"><use href="#c4"/></svg></button><button aria-label="世界 UCS"><svg class="i"><use href="#c5"/></svg></button>
        <button class="split" aria-label="X 旋转"><svg class="i"><use href="#c6"/></svg><svg class="dn"><use href="#dn"/></svg></button><button aria-label="上一个"><svg class="i"><use href="#c7"/></svg></button><button aria-label="原点 UCS"><svg class="i"><use href="#c8"/></svg></button><button aria-label="Z 轴矢量"><svg class="i"><use href="#c9"/></svg></button><button aria-label="三点"><svg class="i"><use href="#c10"/></svg></button>
        <button class="split" aria-label="视图"><svg class="i"><use href="#c11"/></svg><svg class="dn"><use href="#dn"/></svg></button>
        <label class="combo world"><svg class="i"><use href="#c5"/></svg><select aria-label="UCS 列表"><option>世界</option></select><svg class="DN"><use href="#dn"/></svg></label>
      </div>
    </div>
    <h2><span>坐标</span><svg class="dlg"><use href="#dlg"/></svg></h2>
  </section>
  <section class="panel p8">
    <div class="body">
      <div class="grid g-8">
        <label class="combo"><svg class="i"><use href="#xray"/></svg><select aria-label="视觉样式"><option>X 射线</option></select><svg class="DN"><use href="#dn"/></svg></label>
        <label class="combo"><svg class="i"><use href="#view"/></svg><select aria-label="命名视图"><option>未保存的视图</option></select><svg class="DN"><use href="#dn"/></svg></label>
        <button class="vport"><svg class="i"><use href="#vp"/></svg>单个视口<svg class="dn"><use href="#dn"/></svg></button>
      </div>
    </div>
    <h2><span>视图</span><svg class="DN"><use href="#dn"/></svg></h2>
  </section>
  <section class="panel p9">
    <div class="body">
      <button class="big w47 pressed"><svg class="I"><use href="#cull"/></svg><span>剔除</span></button>
      <button class="big w90"><svg class="I"><use href="#nofil"/></svg><span>无过滤器</span><svg class="dn"><use href="#dn"/></svg></button>
      <button class="big w70"><svg class="I"><use href="#giz"/></svg><span>缩放<br>小控件</span><svg class="dn side"><use href="#dn"/></svg></button>
    </div>
    <h2><span>选择</span></h2>
  </section>
  <section class="panel p10">
    <div class="body">
      <button class="big w47"><svg class="I"><use href="#lprop"/></svg><span>图层<br>特性</span></button>
      <div class="layers">
        <label class="combo"><svg class="i bulb"><use href="#bulb"/></svg><svg class="i"><use href="#sun"/></svg><svg class="i"><use href="#unlock"/></svg><i class="swatch"></i><select aria-label="图层"><option>0</option></select><svg class="DN"><use href="#dn"/></svg></label>
        <div class="grid g-10">
          <button aria-label="关"><svg class="i"><use href="#l1"/></svg></button><button aria-label="隔离"><svg class="i"><use href="#l2"/></svg></button><button aria-label="冻结"><svg class="i"><use href="#l3"/></svg></button><button aria-label="锁定"><svg class="i"><use href="#l4"/></svg></button><button><svg class="i"><use href="#l5"/></svg>置为当前</button>
          <button aria-label="打开所有图层"><svg class="i"><use href="#l6"/></svg></button><button aria-label="取消隔离"><svg class="i"><use href="#l7"/></svg></button><button aria-label="解冻"><svg class="i"><use href="#l8"/></svg></button><button aria-label="解锁"><svg class="i"><use href="#l9"/></svg></button><button><svg class="i"><use href="#l10"/></svg>匹配图层</button>
        </div>
      </div>
    </div>
    <h2><span>图层</span><svg class="DN"><use href="#dn"/></svg></h2>
  </section>
  <section class="panel p11">
    <div class="body">
      <button class="big w47"><svg class="I"><use href="#grp"/></svg><span>组</span></button>
      <div class="grid g-11">
        <button aria-label="组编辑"><svg class="i"><use href="#g2"/></svg></button>
        <button aria-label="解除编组"><svg class="i"><use href="#g3"/></svg></button>
        <button aria-label="组选择" class="pressed"><svg class="i"><use href="#g4"/></svg></button>
      </div>
    </div>
    <h2><span>组</span><svg class="DN"><use href="#dn"/></svg></h2>
  </section>
  <section class="panel p12">
    <div class="body">
      <button class="big fill"><svg class="I"><use href="#base"/></svg><span>基点</span><svg class="dn"><use href="#dn"/></svg></button>
    </div>
    <h2><span>视图</span><svg class="DN"><use href="#dn"/></svg><svg class="dlg"><use href="#dlg"/></svg></h2>
  </section>
</div>

<nav class="files">
  <button class="file start"><span>开始</span></button>
  <button class="file on"><span>Drawing1*</span><svg viewBox="0 0 10 10"><path d="M1 1l8 8M9 1L1 9" stroke="#484848" stroke-width="2"/></svg></button>
  <button class="file add" aria-label="新图形"><svg viewBox="0 0 10 10"><path d="M5 0v10M0 5h10" stroke="#bbb" stroke-width="2"/></svg></button>
</nav>

<main class="stage">
  <div class="view">
    <svg class="model" id="model">
      <path id="minor" class="minor"/>
      <path id="major" class="major"/>
      <path id="xaxis" class="xaxis"/>
      <path id="yaxis" class="yaxis"/>
      <path id="lower" class="gear"/>
      <path id="upper" class="gear"/>
      <g stroke-linecap="butt">
        <path d="M1169 666l10 27" stroke="#3f9a3f" stroke-width="5"/>
        <path d="M1181 694l46-6" stroke="#b85450" stroke-width="6"/>
        <path d="M1180 655v41" stroke="#3f659f" stroke-width="5"/>
        <path d="M1180 655v4" stroke="#9fd0ff" stroke-width="4"/>
      </g>
      <text x="1165" y="663" fill="#12a012">Y</text>
      <text x="1177" y="653" fill="#1468f0">Z</text>
      <text x="1224" y="684" fill="#e02424">X</text>
    </svg>
    <span class="vlabel">[−][自定义视图][X 射线]</span>
    <p class="note">使用放样功能，依次选择下齿面和<br>上齿面</p>
    <div class="mdi">
      <button aria-label="最小化"><svg viewBox="0 0 12 12"><path d="M1 8.500h10" stroke="#fff" stroke-width="3"/></svg></button>
      <button aria-label="还原"><svg viewBox="0 0 12 12"><path d="M2 4h6v6H2zM4 3V1h7v7H9" fill="none" stroke="#fff" stroke-width="2"/></svg></button>
      <button aria-label="关闭"><svg viewBox="0 0 12 12"><path d="M2 2l8 8M10 2l-8 8" stroke="#fff" stroke-width="3"/></svg></button>
    </div>
    <svg class="cube" viewBox="150 160 450 470">
      <ellipse cx="379" cy="378" rx="170" ry="106" fill="none" stroke="#454a52" stroke-width="38"/>
      <path d="M293 208l27 82 4 117-24-75z" fill="#8b8c8f"/>
      <path d="M293 208l137-16 38 76-148 22z" fill="#aeafb1"/>
      <path d="M320 290l148-22-5 117-139 22z" fill="url(#gc)"/>
      <path d="M342 272l100-14v38l-93 10z" fill="#98a2aa"/>
      <path d="M293 208l27 82 148-22M320 290l4 117" fill="none" stroke="#33363a" stroke-width="3" stroke-dasharray="18 9"/>
      <path d="M306 265l8 18M305 290l10 22M306 315l10 22" stroke="#555" stroke-width="3" stroke-dasharray="4 4"/>
      <text font-size="84" fill="#4d5258" transform="matrix(1 -.12 .3 .52 334 260)">上</text>
      <text font-size="80" fill="#50565c" transform="matrix(1 -.1 0 .8 356 366)">前</text>
      <g fill="#b4b7b6" font-size="62"><text transform="matrix(.95 -.1 .05 .7 172 410)">西</text><text transform="matrix(.95 .15 -.1 .7 516 354)">东</text><text transform="matrix(1.100 -.1 .2 .9 386 516)">南</text></g>
      <rect x="307" y="560" width="142" height="50" rx="8" fill="#858895" stroke="#a2a5b0" stroke-width="3"/>
      <text x="318" y="594" class="wcs">WCS</text>
      <path d="M411 577h22l-11 12z" fill="none" stroke="#bcbfc6" stroke-width="3"/>
    </svg>
    <svg class="navbar" viewBox="515 680 108 648">
      <rect x="518" y="684" width="98" height="640" rx="8" fill="#9c9fa2" stroke="#101318" stroke-width="4"/>
      <g fill="none" stroke="#2f333b" stroke-width="4">
        <circle cx="597" cy="702" r="11" fill="#55585e" stroke="none"/><path d="M592 697l10 10M602 697l-10 10" stroke="#c4c6c9" stroke-width="3"/>
        <path d="M567 745h32v32a32 32 0 1 1-32-32z" fill="#a9adb4"/><circle cx="567" cy="777" r="18"/><path d="M546 799l9-9M588 799l-9-9"/>
        <path d="M528 856h78M528 1180h78" stroke="#686c72"/>
        <path d="M553 937q-8-18-20-28 3-9 15 1l-6-28q6-8 10 2l6 20 0-32q6-5 9 2l3 30 6-31q6-4 8 4l-3 33 10-20q6-2 8 4-10 24-17 43z" fill="#b6b9bc"/>
        <path d="M533 957l44 44M577 957l-44 44M532 968v-12h12M566 956h12v12M532 990v12h12"/>
        <circle cx="579" cy="998" r="14" fill="#bfd0cf"/><path d="M588 1008l13 13" stroke-width="8"/>
        <path d="M527 1063h80v112h-80zM527 1146h80" fill="#bcd9f5" stroke="#1266c4"/><ellipse cx="566" cy="1107" rx="33" ry="11"/><path d="M540 1118l12-9v18z" fill="#2f333b"/><path d="M560 1133v-50h-6l12-14 12 14h-6v50z" fill="#fff"/>
        <path d="M532 1196h18v18h-18zM556 1196h18v18h-18zM580 1196h18v18h-18zM532 1224h48v38h-48z" fill="#b4b7bb"/>
        <path d="M548 1233l18 9-18 9z" fill="#2f333b"/>
        <circle cx="597" cy="1305" r="10" stroke="#55585e"/><path d="M591 1305h12"/>
      </g>
      <path d="M561 835h15l-7 8zM561 1045h15l-7 8zM561 1159h15l-7 8z" fill="#23272e"/>
    </svg>
    <form class="cmd">
      <div class="grip"><svg viewBox="0 0 68 34"><path d="M8 6v22M13 6v22" stroke="#bbb" stroke-width="2" stroke-dasharray="2 3"/><path d="M20 12l9 10M29 12l-9 10" stroke="#ddd" stroke-width="2"/><path d="M46 8q-4 6 1 9l4 1 8 10 4-4-9-8q2-7-5-9l2 6-3 1z" fill="#c2c5ca" stroke="#222"/></svg></div>
      <svg class="prompt" viewBox="0 0 32 20"><rect x="1" y="1" width="18" height="17" rx="2" fill="#8d96a5" stroke="#b5bac3" stroke-width="2"/><path d="M5 5l4 5-4 5M11 14h5" fill="none" stroke="#222d3c" stroke-width="2"/><path d="M22 8h9l-4 5z" fill="#555"/></svg>
      <input type="text" placeholder="键入命令" aria-label="命令">
      <svg class="up" viewBox="0 0 10 5"><path d="M0 5h10L5 0z" fill="#222"/></svg>
    </form>
  </div>
  <div class="edge"></div>
</main>

<nav class="layouts">
  <button class="lay on">模型</button><button class="lay">布局1</button><button class="lay">布局2</button><button class="lay add" aria-label="新建布局"><svg viewBox="0 0 10 10"><path d="M5 0v10M0 5h10" stroke="#ccc" stroke-width="2"/></svg></button>
</nav>

<footer class="status">
  <div class="cell c-model"><button>模型</button></div>
  <div class="cell c-grid"><button aria-label="栅格"><svg class="i"><use href="#b1"/></svg></button><button aria-label="捕捉"><svg class="i"><use href="#b2"/></svg></button><svg class="sd"><use href="#dn"/></svg></div>
  <div class="cell c-track"><button aria-label="正交"><svg class="i"><use href="#b3"/></svg></button><button aria-label="极轴"><svg class="i"><use href="#b4"/></svg></button><svg class="sd"><use href="#dn"/></svg><button aria-label="等轴测"><svg class="i"><use href="#b5"/></svg></button><svg class="sd"><use href="#dn"/></svg></div>
  <div class="cell c-snap"><button aria-label="对象追踪"><svg class="i"><use href="#b6"/></svg></button><button aria-label="对象捕捉"><svg class="i"><use href="#b7"/></svg></button><svg class="sd"><use href="#dn"/></svg></div>
  <div class="cell c-anno"><button aria-label="注释可见性"><svg class="i"><use href="#b8"/></svg></button><button aria-label="自动缩放"><svg class="i"><use href="#b9"/></svg></button><button aria-label="注释比例"><svg class="i"><use href="#b10"/></svg></button><button class="ratio">1:1</button><svg class="sd"><use href="#dn"/></svg></div>
  <div class="cell c-gear"><button aria-label="工作空间"><svg class="i"><use href="#b11"/></svg></button><svg class="sd"><use href="#dn"/></svg></div>
  <div class="cell c-one"><button aria-label="注释监视器"><svg class="i"><use href="#b12"/></svg></button></div>
  <div class="cell c-one"><button aria-label="隔离对象"><svg class="i"><use href="#b13"/></svg></button></div>
  <div class="cell c-one"><button aria-label="硬件加速"><svg class="i glow"><use href="#b14"/></svg></button></div>
  <div class="cell c-thin"></div>
  <div class="cell c-end"><button aria-label="全屏"><svg class="i"><use href="#b15"/></svg></button><button aria-label="自定义"><svg class="i"><use href="#b16"/></svg></button></div>
</footer>

<div class="menu" role="menu">
  <button role="menuitem"><svg class="I"><use href="#extr"/></svg>拉伸</button>
  <button role="menuitem" class="hot"><svg class="I"><use href="#loft"/></svg>放样</button>
  <button role="menuitem"><svg class="I"><use href="#revo"/></svg>旋转</button>
  <button role="menuitem"><svg class="I"><use href="#swp"/></svg>扫掠</button>
</div>
<div class="tip" role="tooltip">
  <p class="tt">放样</p>
  <p>在数个横截面之间的空间中创建三维实体或曲面</p>
  <hr>
  <p class="cmdname"><svg class="i"><use href="#cmdi"/></svg>LOFT</p>
  <p class="f1">按 F1 键获得更多帮助</p>
</div>
<svg class="arrow" viewBox="170 230 260 440"><path d="M175 233l15 11-3 3 86 153 151 266h-2L263 400l-83-150-4 1z" fill="#fb3a37"/></svg>

<div class="mark">
  <svg viewBox="0 0 460 220">
    <g fill="#fff">
      <text x="0" y="141" class="bai">Bai</text>
      <text x="296" y="136" class="jy">经验</text>
      <ellipse cx="174" cy="56" rx="17" ry="22"/><ellipse cx="206" cy="24" rx="16" ry="22"/><ellipse cx="246" cy="27" rx="17" ry="22"/><ellipse cx="272" cy="66" rx="17" ry="21"/>
    </g>
    <path d="M223 60c14 0 19 11 26 21 10 14 31 24 31 42 0 17-12 24-27 22-14-3-24-4-36-2-18 5-50 6-50-22 0-19 20-28 30-42 8-10 13-19 26-19z" fill="#fff"/>
    <text x="183" y="132" class="du">du</text>
    <text x="4" y="202" class="url" fill="#fff">jingyan.baidu.com</text>
  </svg>
</div>
<script src="scene.js"></script>
</body>
</html>
```
FILE: styles.css
```css
* { box-sizing: border-box; }
body {
  margin: 0; min-height: 100vh; display: flex; flex-direction: column; position: relative;
  background: #383838; color: #f2f2f2; overflow-x: hidden;
  font: 15px/20px "Noto Sans", "Noto Sans CJK SC", sans-serif;
}
button, input, select { font: inherit; color: inherit; background: none; border: 0; margin: 0; padding: 0; border-radius: 0; }
button { display: flex; align-items: center; white-space: nowrap; }
h1, h2, p { margin: 0; font-weight: 400; font-size: 15px; }
svg { display: block; flex: none; }
.sprite { position: absolute; width: 0; height: 0; }
.i { width: 20px; height: 20px; }
.I { width: 38px; height: 38px; }
.dn { width: 6px; height: 4px; }
.DN { width: 10px; height: 6px; }
.dlg { width: 8px; height: 8px; }
.dark { color: #222; }

.titlebar { display: flex; height: 30px; background: #4b8405; border-bottom: 1px solid #2c2c2c; }
.app { position: relative; z-index: 2; flex: none; width: 40px; height: 40px; padding-left: 3px; gap: 3px; background: linear-gradient(#b5b5b5, #6c6c6c); border: 1px solid #1d1d1d; box-shadow: inset 0 0 0 1px #999; }
.logo { width: 24px; height: 26px; }
.qat, .info { display: flex; align-items: center; height: 29px; background: linear-gradient(#a6a6a6, #555); }
.qat { width: 266px; padding-left: 10px; gap: 10px; }
.qat .split { gap: 9px; }
.more { width: 12px; height: 10px; }
.caption { flex: 1; display: flex; justify-content: center; gap: 16px; color: #141d05; line-height: 29px; font-size: 16px; }
.info { width: 554px; padding-right: 5px; }
.fold { width: 16px; height: 28px; justify-content: center; font-size: 10px; color: #fff; }
.search { width: 225px; height: 27px; padding: 0 4px; background: #757575; border: 1px solid #3a3a3a; margin-right: 4px; font-style: italic; font-size: 14px; }
.search::placeholder { color: #cfcfcf; }
.login { margin-left: 10px; margin-right: 12px; width: 140px; gap: 7px; }
.login .dn { margin-left: auto; }
.info .split { margin-left: 10px; gap: 7px; }
.info .help { border-left: 1px solid #999; margin-left: 14px; padding-left: 11px; gap: 10px; }
.win { display: flex; width: 205px; padding-left: 28px; align-items: center; }
.win button { width: 58px; justify-content: center; }
.win svg { width: 12px; height: 12px; }

.tabs { display: flex; height: 24px; padding-left: 57px; background: #545454; border-bottom: 1px solid #2e2e2e; color: #d8d8d8; }
.tabs button { padding: 0 12px; height: 23px; flex: none; }
.tabs button:nth-child(even) { padding-right: 13px; }
.tabs .on { width: 55px; padding: 0 10px; height: 22px; margin: 2px 1px 0 0; background: linear-gradient(#6e6e6e, #5d5d5d); border: 1px solid #303030; border-bottom: 0; color: #fff; }
.tabs .toggle { gap: 6px; margin-left: 16px; }
.tog { width: 18px; height: 10px; }

.ribbon { display: flex; height: 124px; padding-left: 1px; background: linear-gradient(#4e4e4e, #363636); border-bottom: 1px solid #8a8a8a; box-shadow: inset 0 -1px #2b2b2b; }
.panel { flex: none; display: flex; flex-direction: column; height: 122px; background: #5d5d5d; border-right: 1px solid #3f3f3f; box-shadow: inset 1px 0 #6a6a6a, inset -1px 0 #6a6a6a; }
.panel .body { display: flex; height: 100px; padding-top: 3px; }
.panel h2 { display: flex; align-items: center; justify-content: center; gap: 9px; height: 22px; margin: 0 1px; background: linear-gradient(#4b4b4b, #585858); white-space: nowrap; }
.p1 { width: 249px; } .p2 { width: 85px; } .p3 { width: 170px; } .p4 { width: 117px; }
.p5 { width: 181px; } .p6 { width: 77px; } .p7 { width: 181px; } .p8 { width: 256px; }
.p9 { width: 214px; } .p10 { width: 315px; } .p11 { width: 85px; } .p12 { width: 76px; }
.p9 .body, .p10 .body, .p11 .body { padding-left: 2px; }
.p2 h2, .p7 h2 { justify-content: space-between; padding: 0 5px 0 18px; }
.p7 h2 { padding-left: 66px; }
.p6 h2, .p12 h2 { justify-content: space-between; gap: 4px; padding: 0 4px; }
.big { position: relative; flex: none; flex-direction: column; height: 91px; padding-top: 4px; line-height: 21px; }
.big span { margin-top: 6px; }
.big .dn { margin-top: 3px; }
.big .side { position: absolute; right: 3px; top: 69px; margin: 0; }
.big.open { height: 88px; margin-top: 2px; padding-top: 2px; border: 1px solid #333; background: linear-gradient(#4d4d4d, #7b7b7b 44px, #2e3d5a 45px, #7b9bd6 47px, #556f98); }
.pressed { background: linear-gradient(#87a9dc, #54709b); border: 1px solid #2c4168; }
.big.pressed { height: 89px; margin-top: 2px; padding-top: 2px; }
.w75 { width: 75px; } .w55 { width: 55px; } .w52 { width: 52px; } .w47 { width: 47px; } .w90 { width: 90px; } .w70 { width: 70px; }
.fill { width: 76px; }
.grid { display: grid; grid-auto-rows: 31px; align-items: center; align-content: start; }
.grid button { gap: 6px; height: 31px; }
.grid .dn { margin-left: 4px; }
.grid .split { gap: 6px; }
.g-m { padding-left: 7px; }
.g-1 { padding-left: 3px; }
.g-3 { padding-left: 8px; grid-template-columns: 34px 32px 90px; }
.g-3 button .dn { margin-left: 5px; }
.g-4 { padding-left: 7px; grid-template-columns: 30px 35px 45px; }
.g-5 { padding-left: 6px; grid-template-columns: 34px 30px 35px 31px 45px; }
.g-7 { padding-left: 7px; grid-template-columns: 49px 35px 30px 30px 25px; }
.g-7 .split { gap: 3px; }
.g-8 { padding-left: 2px; grid-template-columns: 250px; }
.g-10 { padding-left: 5px; grid-template-columns: 30px 30px 31px 29px 120px; }
.g-11 { padding-left: 2px; }
.g-11 button { width: 29px; height: 28px; justify-content: center; }
.combo { display: flex; align-items: center; height: 28px; padding: 0 4px 0 2px; background: linear-gradient(#575757, #757575); border: 1px solid #333; }
.combo select { appearance: none; flex: 1; min-width: 0; margin-left: 4px; height: 26px; outline: 0; }
.world { grid-column: 2 / -1; margin-left: -4px; }
.world select { margin-left: 0; }
.vport { padding-left: 3px; }
.layers .combo { width: 260px; margin: 2px 0 1px; padding-left: 8px; gap: 2px; }
.combo .bulb { width: 12px; margin-right: 8px; }
.swatch { width: 18px; height: 18px; margin-left: 5px; background: #fff; border: 1px solid #000; }

.files { display: flex; height: 35px; padding: 4px 0 0 22px; background: #383838; border-bottom: 4px solid #575757; }
.file { height: 27px; justify-content: space-between; color: #a6a6a6; background: #505050; clip-path: polygon(0 100%, 8px 80%, 14px 10%, 20px 0, calc(100% - 20px) 0, calc(100% - 14px) 10%, calc(100% - 8px) 80%, 100% 100%); }
.file svg { width: 10px; height: 10px; }
.start { width: 166px; padding-left: 17px; }
.file.on { width: 168px; margin-left: -14px; padding: 0 24px 0 20px; background: linear-gradient(#777, #5d5d5d); color: #f4f4f4; }
.file.add { width: 28px; height: 20px; margin: 5px 0 0 1px; justify-content: center; clip-path: none; border-radius: 4px 10px 2px 10px; }

.stage { flex: 1; display: flex; min-height: 600px; }
.view { position: relative; flex: 1; overflow: hidden; background: #212830; }
.edge { width: 10px; background: linear-gradient(90deg, #b9cfe9 7px, #1cc4ea 7px, #1cc4ea 8px, #000 8px); }
.model { position: absolute; width: 100%; height: 100%; font: 18px "Open Sans", sans-serif; font-weight: 300; }
.model path { fill: none; }
.minor { stroke: #272e39; } .major { stroke: #323949; }
.xaxis { stroke: #7a2229; } .yaxis { stroke: #217326; }
.gear { stroke: #fff; }
.minor, .major, .xaxis, .yaxis, .gear { shape-rendering: crispEdges; }
.vlabel { position: absolute; left: 3px; top: 3px; font-size: 13px; }
.note { position: absolute; left: 217px; top: 478px; font-size: 33px; line-height: 44px; color: #fff; }
.mdi { position: absolute; right: 10px; top: 9px; display: flex; gap: 8px; }
.mdi svg { width: 12px; height: 12px; }
.cube { position: absolute; right: 9px; top: 60px; width: 150px; height: 157px; font-family: "Noto Sans CJK SC", sans-serif; font-weight: 500; }
.wcs { font: 30px "Liberation Sans", sans-serif; fill: #50535d; }
.navbar { position: absolute; right: 1px; top: 234px; width: 36px; height: 216px; }
.cmd { position: absolute; left: 512px; right: 500px; bottom: 0; height: 34px; display: flex; align-items: center; background: #bfc0c2; border-radius: 4px 4px 0 0; overflow: hidden; margin: 0; }
.grip { width: 69px; height: 34px; background: linear-gradient(#6d6e70, #2e2f31); border: 1px solid #74767a; }
.grip svg { width: 66px; height: 32px; }
.prompt { width: 32px; height: 20px; margin-left: 4px; }
.cmd input { flex: 1; margin-left: 9px; font-size: 20px; font-style: italic; height: 32px; }
.cmd input::placeholder { color: #77797d; }
.up { width: 10px; height: 5px; margin-right: 8px; }

.layouts { display: flex; height: 25px; padding-left: 11px; border-top: 1px solid #5b5b5b; }
.lay { width: 69px; height: 22px; justify-content: center; color: #c4c4c4; background: #555; clip-path: polygon(0 0, 100% 0, calc(100% - 8px) 90%, calc(100% - 12px) 100%, 12px 100%, 8px 90%); }
.lay.on { width: 62px; background: linear-gradient(#555, #868686); color: #fff; font-weight: 700; }
.lay.add { width: 30px; height: 20px; margin: 2px 0 0 3px; }
.lay svg { width: 10px; height: 10px; }

.status { display: flex; justify-content: flex-end; align-items: flex-end; height: 33px; gap: 1px; }
.cell { display: flex; align-items: center; justify-content: space-between; height: 32px; background: linear-gradient(#505050, #484848); border: 1px solid #7c7c7c; padding: 0 6px; }
.sd { width: 9px; height: 7px; }
.c-model { width: 37px; padding: 0 3px; }
.c-grid { width: 81px; }
.c-track { width: 129px; }
.c-snap { width: 80px; padding: 0 6px 0 4px; }
.c-anno { width: 134px; padding-left: 5px; }
.ratio { margin: 0 -5px 0 4px; font-size: 14px; }
.c-gear { width: 49px; padding: 0 4px; }
.c-one { width: 31px; padding: 0 5px; }
.c-thin { width: 5px; padding: 0; }
.c-end { width: 61px; padding: 0 4px; }
.glow { border-radius: 50%; box-shadow: 0 0 4px #2287ff; }

.menu { position: absolute; left: 76px; top: 148px; width: 89px; padding: 1px; background: #575757; border: 1px solid #2f2f2f; z-index: 3; }
.menu button { width: 85px; height: 50px; gap: 5px; padding-left: 3px; border: 1px solid transparent; }
.menu .hot { background: #6f6f6f; border-color: #222; outline: 1px dotted #111; outline-offset: -4px; }
.tip { position: absolute; left: 137px; top: 244px; width: 331px; height: 132px; padding: 8px 0 0; background: rgba(238, 239, 240, .9); border: 1px solid #9c9c9c; color: #484848; z-index: 4; white-space: nowrap; }
.tip p { padding-left: 7px; }
.tip .tt { margin-bottom: 8px; font-weight: 500; color: #333; }
.tip hr { margin: 10px 0 6px; border: 0; border-top: 1px solid #a4a4a4; }
.cmdname { display: flex; gap: 6px; font-weight: 700; }
.tip .f1 { margin-top: 9px; font-weight: 700; }
.arrow { position: absolute; left: 170px; top: 230px; width: 260px; height: 440px; z-index: 5; }
.mark { position: absolute; right: 135px; bottom: 52px; opacity: .74; z-index: 5; }
.mark svg { width: 460px; height: 220px; overflow: visible; }
.bai { font: 700 102px "Liberation Sans", sans-serif; }
.jy { font: 900 77px "Noto Sans CJK SC", sans-serif; stroke: #fff; stroke-width: 2px; }
.du { font: 700 66px "Liberation Sans", sans-serif; fill: #212830; }
.url { font: 53px "Open Sans", sans-serif; }
```
FILE: scene.js
```js
// Axonometric projection of the drawing plane: one major grid square per unit.
const O = [1181, 694];
const U = [318.5, -43.6];
const V = [-74.2, -187.9];
const pt = (u, v, o = O) =>
  (o[0] + u * U[0] + v * V[0]).toFixed(1) + ' ' + (o[1] + u * U[1] + v * V[1]).toFixed(1);
const set = (id, d) => document.getElementById(id).setAttribute('d', d);

let minor = '', major = '';
for (let k = -50; k <= 50; k++) {
  const t = k / 5;
  const d = `M${pt(t, -10)}L${pt(t, 10)}M${pt(-10, t)}L${pt(10, t)}`;
  if (k % 5) minor += d; else major += d;
}
set('minor', minor);
set('major', major);
set('xaxis', `M${pt(0, 0)}L${pt(10, 0)}`);
set('yaxis', `M${pt(0, 0)}L${pt(0, 10)}`);

// Half tooth profile: radius and angle in degrees from the tooth's centre line.
const flank = [[1.102, 4.9], [1.13, 3.8], [1.18, 3.05], [1.235, 2.2], [1.281, 1.45]];
function gear(teeth, scale, centre) {
  const p = [];
  for (let i = 0; i < teeth; i++) {
    const mid = 6 + i * 360 / teeth;
    const side = flank.map(([r, a]) => [r, mid - a])
      .concat(flank.slice().reverse().map(([r, a]) => [r, mid + a]));
    for (const [r, a] of side) {
      const g = a * Math.PI / 180;
      p.push(pt(r * scale * Math.cos(g), r * scale * Math.sin(g), centre));
    }
  }
  return 'M' + p.join('L') + 'Z';
}
set('lower', gear(30, 1, O));
set('upper', gear(30, 0.6, [1180, 568]));
```
